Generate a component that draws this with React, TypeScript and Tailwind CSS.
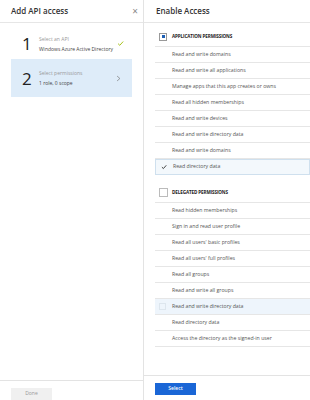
import React from 'react';

const appPermissions = [
  'Read and write domains',
  'Read and write all applications',
  'Manage apps that this app creates or owns',
  'Read all hidden memberships',
  'Read and write devices',
  'Read and write directory data',
  'Read and write domains',
];

const delegatedPermissions = [
  'Read hidden memberships',
  'Sign in and read user profile',
  "Read all users' basic profiles",
  "Read all users' full profiles",
  'Read all groups',
  'Read and write all groups',
];

function Check({ className }: { className?: string }) {
  return (
    <svg viewBox="0 0 10 10" className={className} fill="none" stroke="currentColor" strokeWidth="1.4">
      <path d="M1.5 5.2 L4 7.6 L8.8 2.2" />
    </svg>
  );
}

export default function App() {
  return (
    <div
      className="flex h-[400px] w-[310px] bg-white text-[#333]"
      style={{ fontFamily: '"Open Sans", "Noto Sans", sans-serif' }}
    >
      {/* Left blade */}
      <div className="flex w-[144px] shrink-0 flex-col border-r border-[#e3e3e3]">
        <div className="flex h-[23px] items-center justify-between border-b border-[#e6e6e6] pl-[11px] pr-[5px]">
          <span className="text-[8px] font-semibold text-[#333]">Add API access</span>
          <span className="text-[10px] leading-none text-[#888]">×</span>
        </div>

        <div className="mx-[11px] mt-[5px] flex h-[31px] items-center pl-[11px] pr-[8px]">
          <span className="w-[17px] text-[17px] leading-none text-[#222]">1</span>
          <div className="flex flex-1 flex-col whitespace-nowrap leading-[10px]">
            <span className="text-[5px] text-[#999]">Select an API</span>
            <span className="text-[5px] text-[#444]">Windows Azure Active Directory</span>
          </div>
          <Check className="h-[7px] w-[7px] text-[#a6c21a]" />
        </div>

        <div className="mx-[11px] flex h-[38px] items-center bg-[#deecf9] pl-[11px] pr-[10px]">
          <span className="w-[17px] text-[17px] leading-none text-[#222]">2</span>
          <div className="flex flex-1 flex-col whitespace-nowrap leading-[10px]">
            <span className="text-[5px] text-[#999]">Select permissions</span>
            <span className="text-[5px] text-[#444]">1 role, 0 scope</span>
          </div>
          <svg viewBox="0 0 10 10" className="h-[7px] w-[7px] text-[#777]" fill="none" stroke="currentColor" strokeWidth="1">
            <path d="M3 1.5 L7 5 L3 8.5" />
          </svg>
        </div>

        <div className="mt-auto h-[20px] border-t border-[#e3e3e3] pl-[11px] pt-[7px]">
          <div className="flex h-[12px] w-[41px] items-center justify-center bg-[#f0f0f0] text-[5px] text-[#999]">
            Done
          </div>
        </div>
      </div>

      {/* Right blade */}
      <div className="flex flex-1 flex-col">
        <div className="flex h-[23px] items-center border-b border-[#e6e6e6] pl-[12px]">
          <span className="text-[8px] font-semibold text-[#333]">Enable Access</span>
        </div>

        <div className="ml-[11px] mt-[4px] flex flex-col">
          <div className="flex h-[20px] items-center border-b border-[#e6e6e6] pl-[4px]">
            <span className="flex h-[8px] w-[8px] items-center justify-center border border-[#999]">
              <span className="h-[3px] w-[3px] bg-[#1e5fb4]" />
            </span>
            <span className="ml-[5px] text-[4.6px] font-bold tracking-tight text-[#222]">APPLICATION PERMISSIONS</span>
          </div>
          {appPermissions.map((p, i) => (
            <div key={i} className="flex h-[16px] items-center border-b border-[#e6e6e6] pl-[17px]">
              <span className="text-[5.2px] text-[#555]">{p}</span>
            </div>
          ))}
          <div className="flex h-[16px] items-center border border-[#cfe0ee] bg-[#f3f8fc] pl-[5px]">
            <Check className="h-[6px] w-[6px] text-[#222]" />
            <span className="ml-[6px] text-[5.2px] text-[#555]">Read directory data</span>
          </div>

          <div className="mt-[8px] flex h-[20px] items-center border-b border-[#e6e6e6] pl-[4px]">
            <span className="h-[9px] w-[9px] border border-[#bbb]" />
            <span className="ml-[4px] text-[4.6px] font-bold tracking-tight text-[#222]">DELEGATED PERMISSIONS</span>
          </div>
          {delegatedPermissions.map((p, i) => (
            <div key={i} className="flex h-[16px] items-center border-b border-[#e6e6e6] pl-[17px]">
              <span className="text-[5.2px] text-[#555]">{p}</span>
            </div>
          ))}
          <div className="flex h-[16px] items-center border-b border-[#e6e6e6] bg-[#eef5fc] pl-[4px]">
            <span className="h-[7px] w-[7px] border border-[#dde6ee]" />
            <span className="ml-[6px] text-[5.2px] text-[#555]">Read and write directory data</span>
          </div>
          <div className="flex h-[16px] items-center border-b border-[#e6e6e6] pl-[17px]">
            <span className="text-[5.2px] text-[#555]">Read directory data</span>
          </div>
          <div className="flex h-[16px] items-center border-b border-[#e6e6e6] pl-[17px]">
            <span className="text-[5.2px] text-[#555]">Access the directory as the signed-in user</span>
          </div>
        </div>

        <div className="mt-auto h-[25px] border-t border-[#e3e3e3] pl-[11px] pt-[7px]">
          <div className="flex h-[12px] w-[41px] items-center justify-center bg-[#1a66d6] text-[5px] font-semibold text-white">
            Select
          </div>
        </div>
      </div>
    </div>
  );
}
